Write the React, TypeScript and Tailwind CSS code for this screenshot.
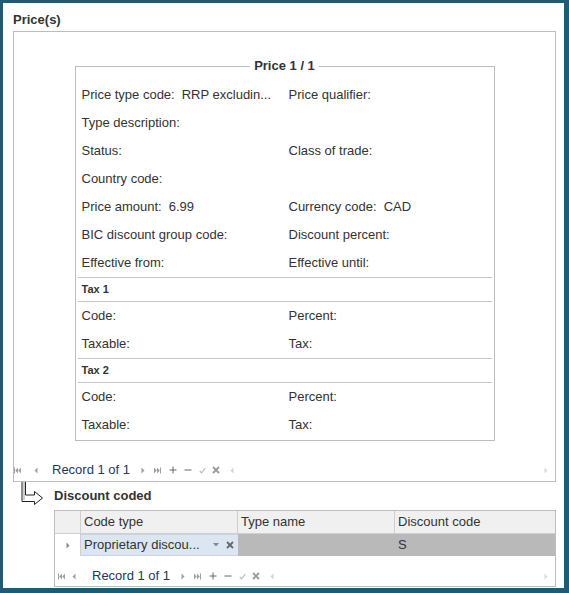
import React from "react";

/* ── Small navigator glyphs ── */
function FirstIcon() {
  return (
    <svg width="7" height="7" viewBox="0 0 7 7" className="shrink-0">
      <rect x="0" y="0.5" width="1" height="6" fill="#a0a0a0" />
      <path d="M4 0.5 L1.2 3.5 L4 6.5 Z M7 0.5 L4.2 3.5 L7 6.5 Z" fill="#a0a0a0" />
    </svg>
  );
}
function LastIcon() {
  return (
    <svg width="8" height="7" viewBox="0 0 8 7" className="shrink-0">
      <path d="M0 0.5 L2.8 3.5 L0 6.5 Z M3 0.5 L5.8 3.5 L3 6.5 Z" fill="#a0a0a0" />
      <rect x="6" y="0.5" width="1" height="6" fill="#a0a0a0" />
    </svg>
  );
}
function PrevIcon({ color = "#a0a0a0" }: { color?: string }) {
  return (
    <svg width="4" height="7" viewBox="0 0 4 7" className="shrink-0">
      <path d="M3.5 0.5 L0.5 3.5 L3.5 6.5 Z" fill={color} />
    </svg>
  );
}
function NextIcon({ color = "#a0a0a0" }: { color?: string }) {
  return (
    <svg width="4" height="7" viewBox="0 0 4 7" className="shrink-0">
      <path d="M0.5 0.5 L3.5 3.5 L0.5 6.5 Z" fill={color} />
    </svg>
  );
}
function PlusIcon() {
  return (
    <svg width="8" height="8" viewBox="0 0 8 8" className="shrink-0">
      <path d="M4 0.5 V7.5 M0.5 4 H7.5" stroke="#666" strokeWidth="1" />
    </svg>
  );
}
function MinusIcon() {
  return (
    <svg width="8" height="8" viewBox="0 0 8 8" className="shrink-0">
      <path d="M0.5 4 H7.5" stroke="#666" strokeWidth="1" />
    </svg>
  );
}
function CheckIcon() {
  return (
    <svg width="7" height="7" viewBox="0 0 7 7" className="shrink-0">
      <path d="M0.8 4 L2.6 5.8 L6.3 1" stroke="#b8b8b8" strokeWidth="1.1" fill="none" />
    </svg>
  );
}
function CrossIcon({ color = "#9a9a9a" }: { color?: string }) {
  return (
    <svg width="8" height="8" viewBox="0 0 8 8" className="shrink-0">
      <path d="M1 1 L7 7 M7 1 L1 7" stroke={color} strokeWidth="1.8" />
    </svg>
  );
}

/* ── Record navigator bar ── */
function Navigator({ className = "", compact = false }: { className?: string; compact?: boolean }) {
  return (
    <div className={`h-[20px] flex items-center ${className}`}>
      <FirstIcon />
      <span className={compact ? "ml-[7px]" : "ml-[13px]"}><PrevIcon /></span>
      <span className={`${compact ? "ml-[16px]" : "ml-[14px]"} text-[13px] text-[#22395a] leading-[16px]`}>Record 1 of 1</span>
      <span className="ml-[11px]"><NextIcon /></span>
      <span className="ml-[9px]"><LastIcon /></span>
      <span className="ml-[7px]"><PlusIcon /></span>
      <span className="ml-[7px]"><MinusIcon /></span>
      <span className="ml-[7px]"><CheckIcon /></span>
      <span className="ml-[6px]"><CrossIcon /></span>
      <span className="ml-[10px]"><PrevIcon color="#d4d4d4" /></span>
      <span className="ml-auto mr-[7px]"><NextIcon color="#dcdcdc" /></span>
    </div>
  );
}

/* ── Form row: two label/value cells ── */
function Field({ label, value }: { label: string; value?: string }) {
  return (
    <div className="flex items-center gap-[7px] pl-[4px] min-w-0 whitespace-nowrap">
      <span>{label}</span>
      {value && <span>{value}</span>}
    </div>
  );
}

function Row({ l, lv, r, rv }: { l: string; lv?: string; r?: string; rv?: string }) {
  return (
    <div className="grid grid-cols-2 h-[28px] items-center">
      <Field label={l} value={lv} />
      {r ? <Field label={r} value={rv} /> : <div />}
    </div>
  );
}

function TaxHeader({ label }: { label: string }) {
  return (
    <div className="h-[25px] flex items-center pl-[4px] text-[11px] font-bold border-y border-[#c4c4c4]">
      {label}
    </div>
  );
}

export default function App() {
  return (
    <div className="w-[569px] h-[593px] bg-white border-[#1f5b74] border-l-[3px] border-t-[3px] border-r-[5px] border-b-[5px] font-['Liberation_Sans',Arial,sans-serif] text-[13px] text-[#333]">
      <div className="pl-[10px] pr-[8px] pt-[9px]">
        <div className="h-[16px] leading-[16px] font-bold">Price(s)</div>

        {/* ── Price group box ── */}
        <div className="mt-[3px] border border-[#bdbdbd] pb-[1px]">
          <fieldset className="mt-[26px] mx-auto w-[420px] border border-[#bdbdbd] px-[2px] pb-[1px]">
            <legend className="mx-auto px-[4px] font-bold leading-[16px]">Price 1 / 1</legend>
            <div className="pt-[7px]">
              <Row l="Price type code:" lv="RRP excludin..." r="Price qualifier:" />
              <Row l="Type description:" />
              <Row l="Status:" r="Class of trade:" />
              <Row l="Country code:" />
              <Row l="Price amount:" lv="6.99" r="Currency code:" rv="CAD" />
              <Row l="BIC discount group code:" r="Discount percent:" />
              <Row l="Effective from:" r="Effective until:" />
            </div>
            <TaxHeader label="Tax 1" />
            <Row l="Code:" r="Percent:" />
            <Row l="Taxable:" r="Tax:" />
            <TaxHeader label="Tax 2" />
            <Row l="Code:" r="Percent:" />
            <Row l="Taxable:" r="Tax:" />
          </fieldset>
          <Navigator className="mt-[19px]" />
        </div>

        {/* ── Detail link ── */}
        <div className="h-[28px] flex items-center">
          <svg width="41" height="28" viewBox="0 0 41 28" className="shrink-0 self-start">
            <path d="M9 0 V19.5 H21.5 V22.5 L29.5 16 L21.5 9.5 V13 H12.5 V0" fill="none" stroke="#222" strokeWidth="1" />
            <path d="M11 0 V18" stroke="#9a9a9a" strokeWidth="1" />
          </svg>
          <span className="font-bold leading-[16px]">Discount coded</span>
        </div>

        {/* ── Discount grid ── */}
        <div className="ml-[41px] border border-[#bdbdbd]">
          <div className="grid grid-cols-[26px_157px_157px_1fr] h-[23px] bg-[#f0f0f0] border-b border-[#cfcfcf]">
            <div className="border-r border-[#cfcfcf]" />
            <div className="border-r border-[#cfcfcf] pl-[3px] flex items-center">Code type</div>
            <div className="border-r border-[#cfcfcf] pl-[3px] flex items-center">Type name</div>
            <div className="pl-[3px] flex items-center">Discount code</div>
          </div>
          <div className="grid grid-cols-[26px_157px_157px_1fr] h-[22px]">
            <div className="flex items-center justify-center border-r border-[#cfcfcf] bg-white">
              <NextIcon color="#888" />
            </div>
            <div className="flex items-center pl-[3px] pr-[4px] bg-[#dce6f3] border-y border-[#c8d4e4]">
              <span className="whitespace-nowrap">Proprietary discou...</span>
              <span className="ml-auto flex items-center gap-[7px]">
                <svg width="6" height="4" viewBox="0 0 6 4"><path d="M0 0 H6 L3 3.5 Z" fill="#888" /></svg>
                <CrossIcon color="#666" />
              </span>
            </div>
            <div className="bg-[#b9b9b9]" />
            <div className="bg-[#b9b9b9] pl-[3px] flex items-center">S</div>
          </div>
          <Navigator className="mt-[10px] pl-[3px]" compact />
        </div>
      </div>
    </div>
  );
}
